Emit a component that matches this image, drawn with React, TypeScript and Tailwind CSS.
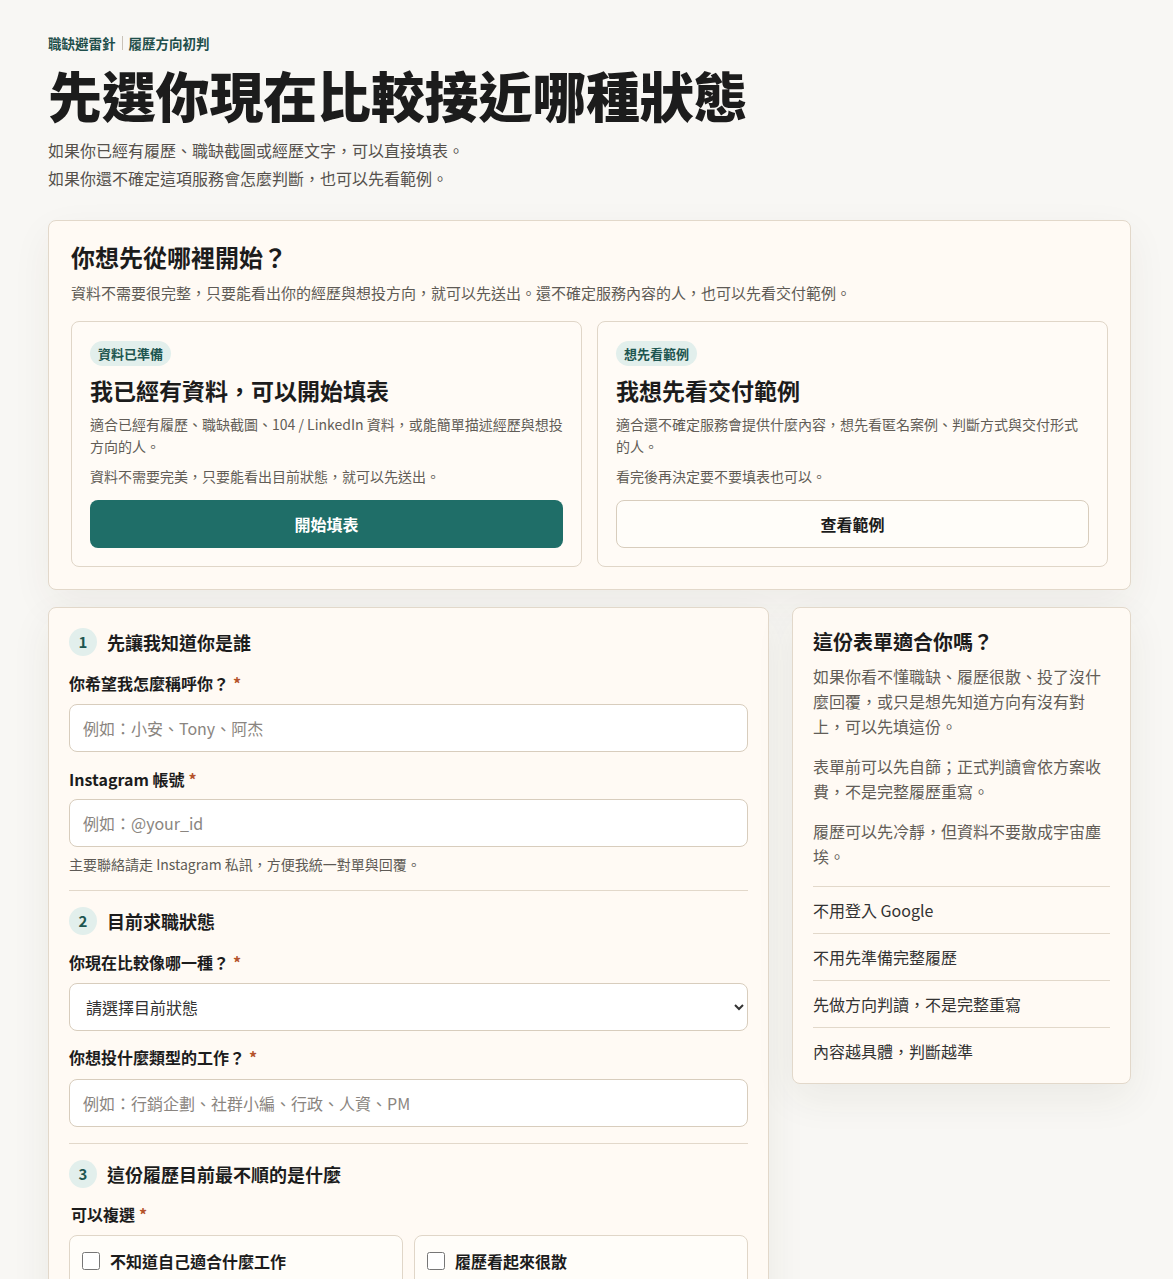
import React from 'react';

const font = { fontFamily: '"Noto Sans CJK TC", "Noto Sans", sans-serif' };

const Badge = ({ children }: { children: React.ReactNode }) => (
  <span className="inline-block rounded-full bg-[#e2efec] px-2 py-[3px] text-[13px] font-bold leading-[19px] text-[#1e5650]">
    {children}
  </span>
);

const Star = () => <span className="ml-1 text-[#b5532b]">*</span>;

const SectionHead = ({ n, title }: { n: number; title: string }) => (
  <div className="flex items-center gap-[10px]">
    <span className="flex h-7 w-7 items-center justify-center rounded-full bg-[#e2efec] text-[15px] font-bold text-[#1e5650]">
      {n}
    </span>
    <h3 className="text-[18px] font-bold leading-7 text-[#1c1c1c]">{title}</h3>
  </div>
);

const Label = ({ children, gap }: { children: React.ReactNode; gap?: string }) => (
  <label className={`${gap ?? 'mb-2'} block text-[16px] font-bold leading-6 text-[#1c1c1c]`}>
    {children}
    <Star />
  </label>
);

const TextInput = ({ placeholder }: { placeholder: string }) => (
  <input
    className="block h-12 w-full rounded-lg border border-[#d8cdbd] bg-white px-[13px] text-[16px] text-[#1c1c1c] placeholder:text-[#8a8580] focus:outline-none"
    placeholder={placeholder}
  />
);

const ChoiceCard = ({ badge, title, lines, action, primary }: {
  badge: string; title: string; lines: string[]; action: string; primary?: boolean;
}) => (
  <div className="flex flex-col rounded-lg border border-[#e0d6c8] bg-[#fffbf6] p-[18px] pt-[18px]">
    <div><Badge>{badge}</Badge></div>
    <h3 className="mt-[9px] text-[23px] font-bold leading-[30px] text-[#1c1c1c]">{title}</h3>
    <p className="mt-2 text-[14px] leading-[22px] text-[#625d57]">{lines[0]}</p>
    <p className="mt-2 text-[14px] leading-[22px] text-[#625d57]">{lines[1]}</p>
    <button
      className={
        primary
          ? 'mt-[13px] h-12 w-full rounded-lg bg-[#1f6e68] text-[16px] font-bold text-white'
          : 'mt-[13px] h-12 w-full rounded-lg border border-[#d8cdbd] bg-[#fffdf9] text-[16px] font-bold text-[#1c1c1c]'
      }
    >
      {action}
    </button>
  </div>
);

const Check = ({ label }: { label: string }) => (
  <label className="flex h-[52px] items-center gap-[10px] rounded-lg border border-[#e0d6c8] bg-[#fffdf9] px-3">
    <input type="checkbox" className="h-[18px] w-[18px] rounded border-[#777]" />
    <span className="text-[16px] font-bold text-[#1c1c1c]">{label}</span>
  </label>
);

const tips = ['不用登入 Google', '不用先準備完整履歷', '先做方向判讀，不是完整重寫', '內容越具體，判斷越準'];

const App = () => {
  return (
    <div className="min-h-screen bg-[#f8f7f4] text-[#1c1c1c]" style={font}>
      <div className="w-[1131px] pl-12 pt-[33px] pb-16">
        <div className="flex items-center text-[13.5px] font-bold leading-5 text-[#1f4f4b]">
          <span>職缺避雷針</span>
          <span className="mx-[6px] h-[14px] w-px bg-[#c9c2b8]" />
          <span>履歷方向初判</span>
        </div>
        <h1 className="mt-[11px] text-[54px] font-black leading-[62px] tracking-[-0.2px] text-[#1c1c1c]">
          先選你現在比較接近哪種狀態
        </h1>
        <div className="mt-[10px] text-[16px] leading-7 text-[#55514c]">
          <p>如果你已經有履歷、職缺截圖或經歷文字，可以直接填表。</p>
          <p>如果你還不確定這項服務會怎麼判斷，也可以先看範例。</p>
        </div>

        <section className="mt-[28px] rounded-lg border border-[#e2d8ca] bg-[#fffaf4] p-[22px] pt-[20px] shadow-[0_14px_40px_rgba(60,50,35,0.06)]">
          <h2 className="text-[24px] font-bold leading-8">你想先從哪裡開始？</h2>
          <p className="mt-[9px] text-[15px] leading-[22px] text-[#5e5a55]">
            資料不需要很完整，只要能看出你的經歷與想投方向，就可以先送出。還不確定服務內容的人，也可以先看交付範例。
          </p>
          <div className="mt-[17px] grid grid-cols-2 gap-[15px]">
            <ChoiceCard
              badge="資料已準備"
              title="我已經有資料，可以開始填表"
              lines={[
                '適合已經有履歷、職缺截圖、104 / LinkedIn 資料，或能簡單描述經歷與想投方向的人。',
                '資料不需要完美，只要能看出目前狀態，就可以先送出。',
              ]}
              action="開始填表"
              primary
            />
            <ChoiceCard
              badge="想先看範例"
              title="我想先看交付範例"
              lines={[
                '適合還不確定服務會提供什麼內容，想先看匿名案例、判斷方式與交付形式的人。',
                '看完後再決定要不要填表也可以。',
              ]}
              action="查看範例"
            />
          </div>
        </section>

        <div className="mt-[17px] grid grid-cols-[1fr_339px] items-start gap-[23px]">
          <form className="rounded-lg border border-[#e2d8ca] bg-[#fffaf4] p-5 shadow-[0_14px_40px_rgba(60,50,35,0.07)]">
            <SectionHead n={1} title="先讓我知道你是誰" />
            <div className="mt-[15px]">
              <Label gap="mb-[9px]">你希望我怎麼稱呼你？</Label>
              <TextInput placeholder="例如：小安、Tony、阿杰" />
            </div>
            <div className="mt-[15px]">
              <label className="mb-2 block text-[16px] font-bold leading-6">
                Instagram 帳號<Star />
              </label>
              <TextInput placeholder="例如：@your_id" />
              <p className="mt-[7px] text-[14px] leading-5 text-[#5e5a55]">
                主要聯絡請走 Instagram 私訊，方便我統一對單與回覆。
              </p>
            </div>

            <hr className="my-4 border-[#e2d8ca]" />

            <SectionHead n={2} title="目前求職狀態" />
            <div className="mt-[15px]">
              <Label gap="mb-[9px]">你現在比較像哪一種？</Label>
              <select className="block h-12 w-full rounded-lg border border-[#d8cdbd] bg-white px-3 text-[16px] text-[#333]">
                <option>請選擇目前狀態</option>
                <option>在職中，想轉換跑道</option>
                <option>待業中，正在找工作</option>
                <option>應屆畢業生</option>
              </select>
            </div>
            <div className="mt-[14px]">
              <Label gap="mb-[10px]">你想投什麼類型的工作？</Label>
              <TextInput placeholder="例如：行銷企劃、社群小編、行政、人資、PM" />
            </div>

            <hr className="my-4 border-[#e2d8ca]" />

            <SectionHead n={3} title="這份履歷目前最不順的是什麼" />
            <div className="mt-[14px]">
              <label className="mb-[9px] block px-[2px] text-[16px] font-bold leading-6">
                可以複選<Star />
              </label>
              <div className="grid grid-cols-2 gap-[11px]">
                <Check label="不知道自己適合什麼工作" />
                <Check label="履歷看起來很散" />
                <Check label="投了很多都沒回覆" />
                <Check label="看不懂職缺在找什麼人" />
              </div>
            </div>
          </form>

          <aside className="rounded-lg border border-[#e2d8ca] bg-[#fffaf4] p-5 shadow-[0_14px_40px_rgba(60,50,35,0.07)]">
            <h2 className="text-[20px] font-bold leading-7">這份表單適合你嗎？</h2>
            <p className="mt-2 text-[16px] leading-[25px] text-[#625d57]">
              如果你看不懂職缺、履歷很散、投了沒什麼回覆，或只是想先知道方向有沒有對上，可以先填這份。
            </p>
            <p className="mt-[15px] text-[16px] leading-[25px] text-[#625d57]">
              表單前可以先自篩；正式判讀會依方案收費，不是完整履歷重寫。
            </p>
            <p className="mt-[15px] text-[16px] leading-[25px] text-[#625d57]">
              履歷可以先冷靜，但資料不要散成宇宙塵埃。
            </p>
            <ul className="mt-[17px]">
              {tips.map((t) => (
                <li
                  key={t}
                  className="border-t border-[#e2d8ca] py-[11px] text-[16px] leading-6 text-[#333] last:pb-0"
                >
                  {t}
                </li>
              ))}
            </ul>
          </aside>
        </div>
      </div>
    </div>
  );
};

export default App;
